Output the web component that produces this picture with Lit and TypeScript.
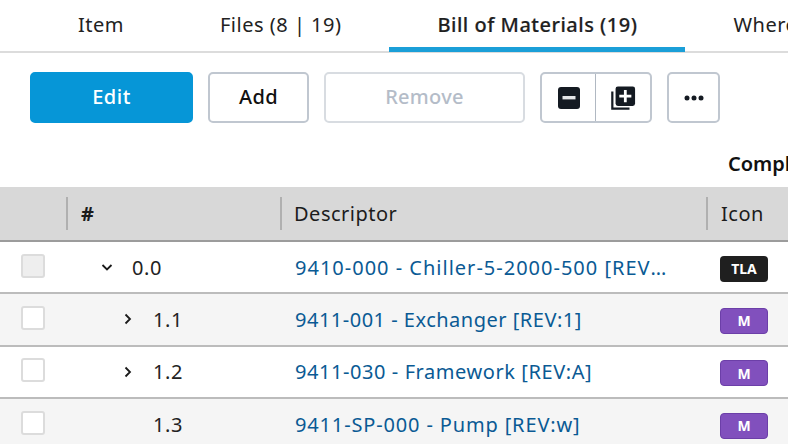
import { LitElement, html, css, svg } from "lit";
import { customElement } from "lit/decorators.js";

const rows = [
  { num: "0.0", level: 0, chev: "down", text: "9410-000 - Chiller-5-2000-500 [REV:1]", badge: "TLA", alt: false, fill: true, ls: 1.0 },
  { num: "1.1", level: 1, chev: "right", text: "9411-001 - Exchanger [REV:1]", badge: "M", alt: true, fill: false, ls: 0.5 },
  { num: "1.2", level: 1, chev: "right", text: "9411-030 - Framework [REV:A]", badge: "M", alt: false, fill: false, ls: 0.57 },
  { num: "1.3", level: 1, chev: "", text: "9411-SP-000 - Pump [REV:w]", badge: "M", alt: true, fill: false, ls: 0.85 },
];

@customElement("app-root")
export class AppRoot extends LitElement {
  static styles = css`
    :host { display: block; width: 788px; height: 444px; overflow: hidden; background: #fff;
      font-family: "Noto Sans", sans-serif; color: #222; font-size: 20px; }
    .tabs { display: flex; height: 53px; box-sizing: border-box; border-bottom: 2px solid #dcdcdc; padding-left: 30px; white-space: nowrap; }
    .tab { padding: 0 48px; height: 50px; line-height: 50px; box-sizing: border-box; flex: none; letter-spacing: 0.5px; }
    .tab.active { font-weight: 500; border-bottom: 5px solid #1b9fd8; height: 52px; color: #1f1f1f; -webkit-text-stroke: 0.2px #1f1f1f; }
    .toolbar { display: flex; gap: 15px; padding: 19px 0 0 30px; }
    .btn { height: 51px; box-sizing: border-box; border: 2px solid #c0c7d0; border-radius: 5px; background: #fff;
      display: flex; align-items: center; justify-content: center; font-size: 20px; letter-spacing: 0.3px; color: #111; }
    .label { padding-bottom: 2px; }
    .edit { width: 163px; background: #0696d7; border-color: #0696d7; color: #fff; font-weight: 500; letter-spacing: 0.5px; }
    .add { width: 101px; font-weight: 500; }
    .remove { width: 201px; color: #b4bcc8; border-color: #d8dce1; font-weight: 500; }
    .group { width: 112px; display: flex; padding: 0; }
    .group > div { display: flex; align-items: center; justify-content: center; height: 100%; }
    .g1 { width: 54px; box-sizing: border-box; border-right: 1px solid #b0b8c2; }
    .g2 { flex: 1; }
    .more { width: 53px; }
    .summary { height: 64px; padding-left: 728px; line-height: 81px; font-weight: 600; white-space: nowrap; color: #111; }
    .row { display: grid; grid-template-columns: 66px 214px 426px 82px; }
    .head { height: 55px; background: #d8d8d8; border-bottom: 2px solid #9c9c9c; box-sizing: border-box; }
    .hc { display: flex; align-items: center; position: relative; padding-left: 15px; letter-spacing: 0.5px; color: #1c1c1c; }
    .hc.tight { padding-left: 14px; }
    .hc.sep::before { content: ""; width: 2px; height: 33px; background: #b0b0b0; position: absolute; left: 0; top: 10px; }
    .hash { font-weight: 700; }
    .body { height: 52.3px; box-sizing: border-box; border-bottom: 2px solid #bcbcbc; background: #fff; }
    .body.alt { background: #f5f5f5; }
    .cell { display: flex; align-items: center; min-width: 0; }
    .cb { width: 24px; height: 24px; margin: -3px 0 0 21px; box-sizing: border-box; border: 2px solid #dcdcdc; border-radius: 3px; background: #fff; }
    .cb.fill { background: #eeeeee; }
    .chev { width: 16px; height: 16px; flex: none; display: block; }
    .chev-slot { width: 16px; height: 16px; flex: none; }
    .num { letter-spacing: 0.6px; }
    .num span { margin-left: 17px; }
    .link { color: #0a5a94; padding-left: 15px; }
    .link a { display: block; overflow: hidden; text-overflow: ellipsis; white-space: nowrap; width: 374px; }
    .badge { margin: 3px 0 0 14px; width: 48px; height: 26px; border-radius: 4px; display: flex; align-items: center; justify-content: center;
      font-size: 14px; font-weight: 700; color: #fff; box-sizing: border-box; }
    .tla { background: #1f1f1f; }
    .m { background: #8150bd; border: 1px solid #6c3fa8; }
  `;

  private chev(kind: string) {
    if (!kind) return html`<div class="chev-slot"></div>`;
    const d = kind === "down" ? "M3.5 6 L8 10.5 L12.5 6" : "M5.5 3.5 L10 8 L5.5 12.5";
    return html`<svg class="chev" viewBox="0 0 16 16" fill="none" stroke="#1a1a1a" stroke-width="1.8">${svg`<path d=${d} />`}</svg>`;
  }

  render() {
    return html`
      <div class="tabs">
        <div class="tab">Item</div>
        <div class="tab">Files (8 | 19)</div>
        <div class="tab active">Bill of Materials (19)</div>
        <div class="tab">Where Used</div>
      </div>
      <div class="toolbar">
        <div class="btn edit"><span class="label">Edit</span></div>
        <div class="btn add"><span class="label">Add</span></div>
        <div class="btn remove"><span class="label">Remove</span></div>
        <div class="btn group">
          <div class="g1">
            <svg width="24" height="24" viewBox="0 0 24 24"><rect x="1" y="1" width="22" height="22" rx="3" fill="#141a22"/><rect x="5.5" y="10" width="13" height="3.4" fill="#e4e6e8"/></svg>
          </div>
          <div class="g2">
            <svg width="26" height="26" viewBox="0 0 28 28">
              <path d="M2.5 7 V25.5 H21" fill="none" stroke="#141a22" stroke-width="2.4"/>
              <rect x="6" y="1.5" width="21" height="21" rx="2.5" fill="#141a22"/>
              <path d="M16.5 5.5 V18.5 M10 12 H23" stroke="#fff" stroke-width="3"/>
            </svg>
          </div>
        </div>
        <div class="btn more">
          <svg width="22" height="8" viewBox="0 0 22 8"><circle cx="4" cy="4" r="2.5" fill="#141a22"/><circle cx="11" cy="4" r="2.5" fill="#141a22"/><circle cx="18" cy="4" r="2.5" fill="#141a22"/></svg>
        </div>
      </div>
      <div class="summary">Completed</div>
      <div class="row head">
        <div></div>
        <div class="hc sep"><span class="hash">#</span></div>
        <div class="hc sep tight">Descriptor</div>
        <div class="hc sep">Icon</div>
      </div>
      ${rows.map((r) => html`
        <div class="row body ${r.alt ? "alt" : ""}">
          <div class="cell"><div class="cb ${r.fill ? "fill" : ""}"></div></div>
          <div class="cell num" style="padding-left:${r.level ? 54 : 33}px">${this.chev(r.chev)}<span>${r.num}</span></div>
          <div class="cell link"><a style="letter-spacing:${r.ls}px">${r.text}</a></div>
          <div class="cell"><div class="badge ${r.badge === "TLA" ? "tla" : "m"}">${r.badge}</div></div>
        </div>`)}
    `;
  }
}
